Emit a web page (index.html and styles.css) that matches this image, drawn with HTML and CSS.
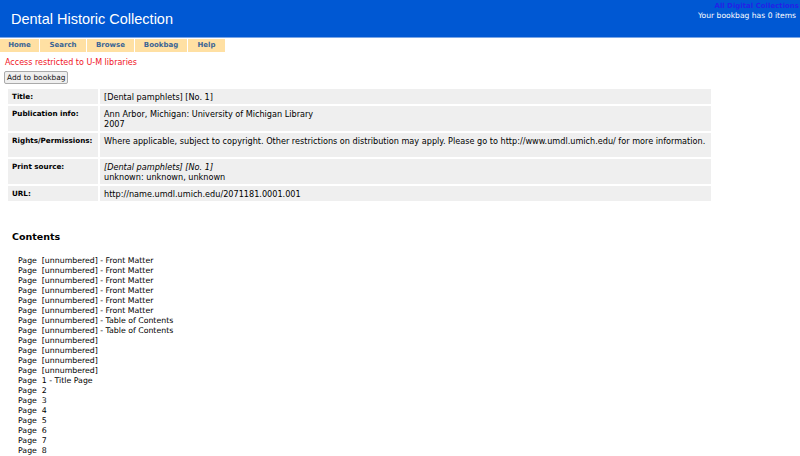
FILE: index.html
```html
<!DOCTYPE html>
<html lang="en">
  <head>
    <meta charset="UTF-8" />
    <title>Dental Historic Collection</title>
    <link rel="stylesheet" href="styles.css">
  </head>
  <body>
    <div class="header">
      <div class="colltitle">Dental Historic Collection</div>
      <div class="headright">
        <a class="alldc" href="#">All Digital Collections</a>
        <div class="bagcount">Your bookbag has 0 items</div>
      </div>
    </div>
    <div class="nav">
      <a class="tab t-home" href="#">Home</a>
      <a class="tab t-search" href="#">Search</a>
      <a class="tab t-browse" href="#">Browse</a>
      <a class="tab t-bag" href="#">Bookbag</a>
      <a class="tab t-help" href="#">Help</a>
    </div>
    <div class="restricted">Access restricted to U-M libraries</div>
    <button class="addbag">Add to bookbag</button>
    <table class="meta">
      <tr>
        <th>Title:</th>
        <td>[Dental pamphlets] [No. 1]</td>
      </tr>
      <tr>
        <th>Publication info:</th>
        <td>Ann Arbor, Michigan: University of Michigan Library<br />2007</td>
      </tr>
      <tr class="tall">
        <th>Rights/Permissions:</th>
        <td>Where applicable, subject to copyright. Other restrictions on distribution may apply. Please go to http://www.umdl.umich.edu/ for more information.</td>
      </tr>
      <tr>
        <th>Print source:</th>
        <td><i>[Dental pamphlets] [No. 1]</i><br />unknown: unknown, unknown</td>
      </tr>
      <tr>
        <th>URL:</th>
        <td>http://name.umdl.umich.edu/2071181.0001.001</td>
      </tr>
    </table>
    <div class="contents">Contents</div>
    <ul class="pages">
      <li>Page&nbsp; [unnumbered] - Front Matter</li>
      <li>Page&nbsp; [unnumbered] - Front Matter</li>
      <li>Page&nbsp; [unnumbered] - Front Matter</li>
      <li>Page&nbsp; [unnumbered] - Front Matter</li>
      <li>Page&nbsp; [unnumbered] - Front Matter</li>
      <li>Page&nbsp; [unnumbered] - Front Matter</li>
      <li>Page&nbsp; [unnumbered] - Table of Contents</li>
      <li>Page&nbsp; [unnumbered] - Table of Contents</li>
      <li>Page&nbsp; [unnumbered]</li>
      <li>Page&nbsp; [unnumbered]</li>
      <li>Page&nbsp; [unnumbered]</li>
      <li>Page&nbsp; [unnumbered]</li>
      <li>Page&nbsp; 1 - Title Page</li>
      <li>Page&nbsp; 2</li>
      <li>Page&nbsp; 3</li>
      <li>Page&nbsp; 4</li>
      <li>Page&nbsp; 5</li>
      <li>Page&nbsp; 6</li>
      <li>Page&nbsp; 7</li>
      <li>Page&nbsp; 8</li>
    </ul>
  </body>
</html>
```

FILE: styles.css
```css
body {
  margin: 0;
  font-family: "DejaVu Sans", Verdana, sans-serif;
  font-size: 8px;
  color: #000;
  background: #fff;
}
.header {
  height: 37px;
  background: #0058d3;
  border-bottom: 1px solid #7aa6e6;
  display: flex;
  justify-content: space-between;
}
.colltitle {
  font-family: "Liberation Sans", Arial, sans-serif;
  font-size: 14.5px;
  color: #fff;
  padding: 11px 0 0 11px;
}
.headright {
  text-align: right;
  padding: 2px 1px 0 0;
}
.alldc {
  display: block;
  font-size: 7px;
  font-weight: bold;
  color: #2323e6;
  text-decoration: none;
}
.bagcount {
  color: #fff;
  font-size: 7.6px;
  padding: 1px 3px 0 0;
}
.nav {
  display: flex;
  gap: 1px;
  height: 13px;
  margin-top: 1px;
}
.tab {
  background: #ffe0a3;
  color: #3b6595;
  font-size: 7px;
  font-weight: bold;
  text-decoration: none;
  text-align: center;
  line-height: 13px;
}
.t-home { width: 39px; }
.t-search { width: 46px; }
.t-browse { width: 47px; }
.t-bag { width: 52px; }
.t-help { width: 37px; }
.restricted {
  color: #f0141e;
  font-size: 8px;
  margin: 6px 0 0 5px;
}
.addbag {
  font-family: "DejaVu Sans", Verdana, sans-serif;
  font-size: 7.4px;
  color: #111;
  margin: 4px 0 0 4px;
  padding: 1px 2px;
  background: #efefef;
  border: 1px solid #aaa;
  border-radius: 2px;
  height: 13px;
  line-height: 9px;
}
.meta {
  border-spacing: 2px;
  margin: 3px 0 0 6px;
  width: 707px;
}
.meta th,
.meta td {
  background: #efefef;
  text-align: left;
  vertical-align: top;
  line-height: 10px;
  padding: 3px 4px 2px;
}
.meta td {
  font-size: 8.15px;
}
.meta th {
  width: 82px;
  font-size: 7.2px;
  font-weight: bold;
  white-space: nowrap;
}
.meta .tall th,
.meta .tall td {
  padding-bottom: 11px;
}
.contents {
  font-size: 9.5px;
  font-weight: bold;
  margin: 28px 0 0 12px;
}
.pages {
  list-style: none;
  margin: 14px 0 0 18px;
  padding: 0;
  font-size: 7.8px;
  line-height: 10px;
}
```
